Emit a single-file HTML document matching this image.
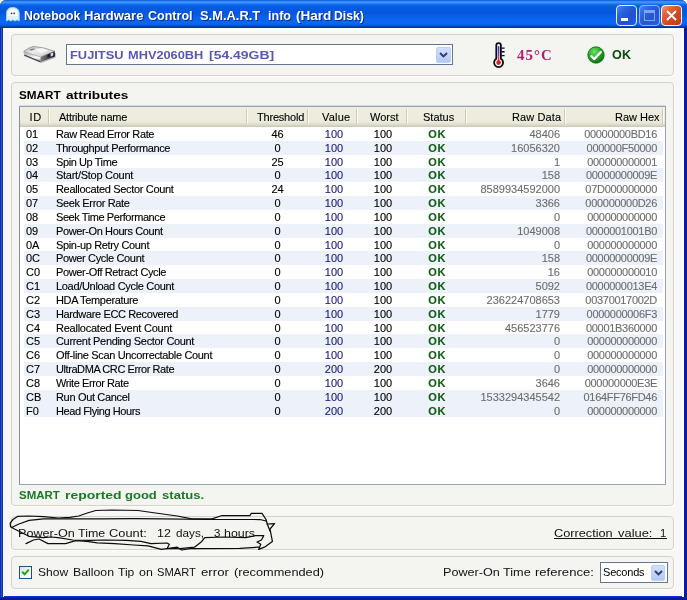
<!DOCTYPE html>
<html><head><meta charset="utf-8"><title>Notebook Hardware Control S.M.A.R.T info (Hard Disk)</title>
<style>
*{box-sizing:border-box;margin:0;padding:0}
html,body{width:687px;height:600px;overflow:hidden;background:#fff}
body{font-family:"Liberation Sans",sans-serif;font-size:11px;color:#000;position:relative}
.abs{position:absolute}
#win{filter:opacity(0.9999);position:absolute;left:0;top:0;width:687px;height:600px;background:#0a34d4;border-radius:6px 6px 0 0;overflow:hidden}
#title{position:absolute;z-index:2;left:0;top:0;width:687px;height:28.4px;
 background:linear-gradient(to bottom,#0a4ccc 0,#2f86f8 4%,#3f97ff 8%,#2a84fa 12%,#0f68ec 17%,#075ce2 23%,#0457de 45%,#0860ea 60%,#0a68f4 80%,#0a62ec 87%,#0850d4 92%,#0638ae 96.5%,#042a94 100%)}
#title .txt{position:absolute;left:24px;top:8px;font:bold 13px "Liberation Sans",sans-serif;color:#fff;white-space:pre;letter-spacing:-0.04px;text-shadow:1px 1px 0 #0a2c8c}
#client{position:absolute;left:3px;top:28px;width:681px;height:568px;background:#f8f7f5}
#client:before{content:"";position:absolute;left:0;top:0;width:681px;height:4px;background:linear-gradient(to bottom,#fff 0,#fff 50%,#f8f7f5 100%)}
.gb{position:absolute;border:1px solid #d3d2ca;border-radius:4px;background:#f4f4f1;box-shadow:1px 1px 0 #fdfdfb}
.v{font-family:"Liberation Sans",sans-serif;white-space:pre;position:absolute;transform-origin:0 50%}
/* listview */
#lv{position:absolute;left:19px;top:106px;width:647px;height:379px;border:1px solid #9aa3b0;border-left-color:#868f9c;background:#fff;box-shadow:0 -1px 0 #d8dce2}
#hdr{position:absolute;left:20px;top:107px;width:645px;height:20px;background:linear-gradient(to bottom,#eeede0 0,#ecebdc 75%,#e2dfcc 85%,#d6d2c2 93%,#cbc7b8 100%)}
.h{position:absolute;top:0;height:20px;line-height:20px;white-space:pre;color:#000;font-size:11px;-webkit-text-stroke:0.1px}
.sep{position:absolute;top:2px;width:2px;height:15px;border-left:1px solid #cdcabb;border-right:1px solid #fbfbf6}
.row{position:absolute;left:20px;width:645px;height:13.83px;line-height:14px;white-space:pre;-webkit-text-stroke:0.12px}
.row.alt:before{content:"";position:absolute;left:4px;right:2px;top:0;bottom:0;background:#edf2fa}
.c{position:absolute;top:0;height:14px}
.id{left:6px;letter-spacing:0}
.nm{left:36px;letter-spacing:-0.35px}
.th{left:228px;width:59px;text-align:center}
.va{left:288px;width:52px;text-align:center;color:#1a1a7a}
.wo{left:338px;width:50px;text-align:center}
.st{left:388.7px;width:57px;text-align:center;color:#0b5f10;font-weight:bold;letter-spacing:0.6px}
.rd{right:105px;text-align:right;color:#6e6e6e}
.rh{right:8px;text-align:right;color:#6e6e6e;letter-spacing:-0.3px}
</style></head><body>
<div id="win">
 <div id="title">
  <svg class="abs" style="left:5px;top:6px" width="16" height="17" viewBox="0 0 16 17">
   <path d="M1.5 15V7.5C1.5 3.5 4 1.5 7.8 1.5S14.2 3.5 14.2 7.5V15L12 13.8 10 15 7.8 13.8 5.8 15 3.8 13.8Z" fill="#dff2fb" stroke="#9fd0ee" stroke-width="1"/>
   <path d="M3 8C3 4.5 5 3 7.8 3S12.6 4.5 12.6 8V10H3Z" fill="#f6fcff"/>
   <circle cx="6.6" cy="7.3" r="0.9" fill="#3a3a5a"/><circle cx="9.2" cy="7.3" r="0.9" fill="#3a3a5a"/>
  </svg>
  <span class="v" style="left:24.05px;top:9px;font-weight:bold;font-size:13px;line-height:14px;color:#fff;text-shadow:1px 1px 0 #0a2c8c;transform:scaleX(0.939)">Notebook</span>
 <span class="v" style="left:84.10px;top:9px;font-weight:bold;font-size:13px;line-height:14px;color:#fff;text-shadow:1px 1px 0 #0a2c8c;transform:scaleX(1.003)">Hardware</span>
 <span class="v" style="left:147.82px;top:9px;font-weight:bold;font-size:13px;line-height:14px;color:#fff;text-shadow:1px 1px 0 #0a2c8c;transform:scaleX(0.964)">Control</span>
 <span class="v" style="left:199.50px;top:9px;font-weight:bold;font-size:13px;line-height:14px;color:#fff;text-shadow:1px 1px 0 #0a2c8c;transform:scaleX(0.993)">S.M.A.R.T</span>
 <span class="v" style="left:268.03px;top:9px;font-weight:bold;font-size:13px;line-height:14px;color:#fff;text-shadow:1px 1px 0 #0a2c8c;transform:scaleX(0.964)">info</span>
 <span class="v" style="left:296.17px;top:9px;font-weight:bold;font-size:13px;line-height:14px;color:#fff;text-shadow:1px 1px 0 #0a2c8c;transform:scaleX(1.043)">(Hard</span>
 <span class="v" style="left:334.36px;top:9px;font-weight:bold;font-size:13px;line-height:14px;color:#fff;text-shadow:1px 1px 0 #0a2c8c;transform:scaleX(0.937)">Disk)</span>
  <!-- buttons -->
  <div class="abs" style="left:616px;top:5px;width:21px;height:21px;border:1px solid #e4eeff;border-radius:4px;background:linear-gradient(135deg,#4a8af4 0,#2a62e0 30%,#2050d0 60%,#2a5ce0 100%)"><div class="abs" style="left:4px;top:12px;width:7px;height:3px;background:#fff"></div></div>
  <div class="abs" style="left:638.5px;top:5px;width:21px;height:21px;border:1px solid #8fb4f4;border-radius:4px;background:linear-gradient(135deg,#4a86f0 0,#2a62e0 30%,#2456d4 60%,#2a5ce0 100%)"><div class="abs" style="left:4px;top:4px;width:11px;height:11px;border:1px solid #7ea4ee;border-top:3px solid #7ea4ee"></div></div>
  <div class="abs" style="left:661px;top:5px;width:21px;height:21px;border:1px solid #fff;border-radius:4px;background:linear-gradient(135deg,#f2997a 0,#e4643e 28%,#cf4822 60%,#c03c18 100%)">
   <svg class="abs" style="left:3px;top:3px" width="13" height="13" viewBox="0 0 13 13"><path d="M2 2L11 11M11 2L2 11" stroke="#fff" stroke-width="1.9" stroke-linecap="butt"/></svg></div>
 </div>
 <div id="client"></div>

 <!-- group boxes -->
 <div class="gb" style="left:11px;top:34px;width:663px;height:42px"></div>
 <div class="gb" style="left:11px;top:82px;width:663px;height:424px"></div>
 <div class="gb" style="left:11px;top:516px;width:663px;height:34px"></div>
 <div class="gb" style="left:11px;top:556px;width:663px;height:33px"></div>

 <!-- hdd icon -->
 <svg class="abs" style="left:23px;top:45px" width="34" height="19" viewBox="0 0 34 19">
  <defs>
   <linearGradient id="hd1" x1="0" y1="0" x2="1" y2="1"><stop offset="0" stop-color="#a4a4a4"/><stop offset="0.4" stop-color="#ececec"/><stop offset="1" stop-color="#c4c4c4"/></linearGradient>
   <linearGradient id="hd2" x1="0" y1="0" x2="1" y2="0"><stop offset="0" stop-color="#808080"/><stop offset="0.45" stop-color="#4c4c52"/><stop offset="1" stop-color="#1e1e28"/></linearGradient>
   <linearGradient id="hd3" x1="0" y1="0" x2="0" y2="1"><stop offset="0" stop-color="#a4a4a4"/><stop offset="0.3" stop-color="#c8c8c8"/><stop offset="0.6" stop-color="#ffffff"/><stop offset="1" stop-color="#808080"/></linearGradient>
  </defs>
  <path d="M1 10.5L17.5 17.2 32 11.8 32.3 7 17 13 0.8 6.6Z" fill="#4a4a4e" opacity="0.35" transform="translate(0.6,0.9)"/>
  <path d="M0.7 6.5Q5 2.8 10.2 1.4 21 2.2 31.6 6.2L17.5 12.2Z" fill="url(#hd1)" stroke="#8e8e8e" stroke-width="0.8"/>
  <path d="M0.7 6.5L17.5 12.2V16.9L1 10.2Z" fill="url(#hd3)"/>
  <path d="M1.2 10.1L17.5 16.7" stroke="#3c3c40" stroke-width="1.1"/>
  <path d="M17.5 12.2L31.8 6.2 32 11.4 17.5 16.9Z" fill="url(#hd2)"/>
  <path d="M27.6 8.6L30.2 7.6V10.6L27.6 11.6Z" fill="#dcdce4"/>
  <path d="M24.6 9.4L27.2 8.4V11.6L24.6 12.6Z" fill="#1c1c28"/>
  <path d="M6.6 4.6L11.2 3.4 12 4.2 7.6 5.6Z" fill="#6c6c6c"/>
  <path d="M12.5 4.2L19 3.4 25 5.6 18 8.4Z" fill="#fafafa" opacity="0.8"/>
 </svg>

 <!-- device combobox -->
 <div class="abs" style="left:66px;top:44px;width:387px;height:21px;border:1px solid #64758e;background:#fff"></div>
 <span class="v" style="left:70.18px;top:48px;font-weight:bold;font-size:11px;line-height:14px;color:#5a56b4;transform:scaleX(1.169)">FUJITSU</span>
 <span class="v" style="left:127.79px;top:48px;font-weight:bold;font-size:11px;line-height:14px;color:#5a56b4;transform:scaleX(1.162)">MHV2060BH</span>
 <span class="v" style="left:209.24px;top:48px;font-weight:bold;font-size:11px;line-height:14px;color:#5a56b4;transform:scaleX(1.269)">[54.49GB]</span>
 <div class="abs" style="left:436px;top:47px;width:15px;height:15.5px;border-radius:2px;border:1px solid #bccff6;background:linear-gradient(to bottom,#d2defc 0,#c4d4fb 50%,#b4c8f6 100%)">
  <svg class="abs" style="left:2px;top:4px" width="9" height="6" viewBox="0 0 9 6"><path d="M1 1L4.5 4.5 8 1" stroke="#2e3f64" stroke-width="1.9" fill="none"/></svg></div>

 <!-- thermometer -->
 <svg class="abs" style="left:492px;top:42px" width="14" height="27" viewBox="0 0 14 27">
  <defs><linearGradient id="tg" x1="0" y1="0" x2="0" y2="1"><stop offset="0" stop-color="#2a2ae0"/><stop offset="0.45" stop-color="#5a3ad8"/><stop offset="0.75" stop-color="#d83a78"/><stop offset="1" stop-color="#e01818"/></linearGradient></defs>
  <path d="M4.3 3.5a2.3 2.3 0 0 1 4.6 0V16.7a4.5 4.5 0 1 1-4.6 0Z" fill="#fff" stroke="#0c0c0c" stroke-width="1.8"/>
  <rect x="5.8" y="4.2" width="1.6" height="15" fill="url(#tg)"/>
  <circle cx="6.6" cy="20.6" r="2.3" fill="#dc1c20"/>
  <path d="M9.6 6.1h3M9.6 9.8h3M9.6 13.6h3" stroke="#0c0c0c" stroke-width="1.4"/>
 </svg>
 <div class="v" style="left:517px;top:48px;font-family:'Liberation Serif',serif;font-weight:bold;font-size:14px;line-height:15px;color:#b0206a;letter-spacing:1px;transform:scaleX(1.06)">45°C</div>

 <!-- OK icon -->
 <svg class="abs" style="left:587.3px;top:45.7px" width="18" height="18" viewBox="0 0 18 18">
  <defs><radialGradient id="g" cx="40%" cy="30%" r="75%"><stop offset="0" stop-color="#6ee06a"/><stop offset="0.55" stop-color="#22a822"/><stop offset="1" stop-color="#0c6a10"/></radialGradient></defs>
  <circle cx="9" cy="9" r="8.2" fill="url(#g)" stroke="#0d6412" stroke-width="0.8"/>
  <path d="M4.4 10.2L7.3 13.1 13.8 6.1" stroke="#1c5a20" stroke-opacity="0.55" stroke-width="2.3" fill="none" stroke-linecap="round" stroke-linejoin="round" transform="translate(0.5,0.8)"/><path d="M4.4 10.2L7.3 13.1 13.8 6.1" stroke="#fff" stroke-width="2.3" fill="none" stroke-linecap="round" stroke-linejoin="round"/>
 </svg>
 <div class="v" style="left:611.5px;top:47.8px;font-weight:bold;font-size:12px;line-height:15px;color:#0c4a10;letter-spacing:0.14px;transform:scaleX(1.05)">OK</div>

 <span class="v" style="left:19.28px;top:88px;font-weight:bold;font-size:11px;line-height:14px;color:#000;transform:scaleX(1.065)">SMART</span>
 <span class="v" style="left:65.53px;top:88px;font-weight:bold;font-size:11px;line-height:14px;color:#000;transform:scaleX(1.245)">attributes</span>

 <div id="lv"></div>
 <div id="hdr">
  <span class="h" style="left:9.5px;letter-spacing:0.8px">ID</span>
  <span class="h" style="left:39px;letter-spacing:-0.25px">Attribute name</span>
  <span class="h" style="left:237px;letter-spacing:-0.2px">Threshold</span>
  <span class="h" style="left:302px;letter-spacing:0.2px">Value</span>
  <span class="h" style="left:350px;letter-spacing:0">Worst</span>
  <span class="h" style="left:403px;letter-spacing:0">Status</span>
  <span class="h" style="left:492px;letter-spacing:0.1px">Raw Data</span>
  <span class="h" style="left:595px;letter-spacing:0">Raw Hex</span>
  <i class="sep" style="left:28px"></i><i class="sep" style="left:226px"></i><i class="sep" style="left:286.5px"></i>
  <i class="sep" style="left:336px"></i><i class="sep" style="left:386px"></i><i class="sep" style="left:444.5px"></i>
  <i class="sep" style="left:544px"></i><i class="sep" style="left:642px"></i>
 </div>
<div class="row" style="top:127.00px"><span class="c id">01</span><span class="c nm" style="letter-spacing:-0.371px">Raw Read Error Rate</span><span class="c th">46</span><span class="c va">100</span><span class="c wo">100</span><span class="c st">OK</span><span class="c rd">48406</span><span class="c rh">00000000BD16</span></div>
<div class="row alt" style="top:140.83px"><span class="c id">02</span><span class="c nm" style="letter-spacing:-0.373px">Throughput Performance</span><span class="c th">0</span><span class="c va">100</span><span class="c wo">100</span><span class="c st">OK</span><span class="c rd">16056320</span><span class="c rh">000000F50000</span></div>
<div class="row" style="top:154.66px"><span class="c id">03</span><span class="c nm" style="letter-spacing:-0.411px">Spin Up Time</span><span class="c th">25</span><span class="c va">100</span><span class="c wo">100</span><span class="c st">OK</span><span class="c rd">1</span><span class="c rh">000000000001</span></div>
<div class="row alt" style="top:168.49px"><span class="c id">04</span><span class="c nm" style="letter-spacing:-0.264px">Start/Stop Count</span><span class="c th">0</span><span class="c va">100</span><span class="c wo">100</span><span class="c st">OK</span><span class="c rd">158</span><span class="c rh">00000000009E</span></div>
<div class="row" style="top:182.32px"><span class="c id">05</span><span class="c nm" style="letter-spacing:-0.323px">Reallocated Sector Count</span><span class="c th">24</span><span class="c va">100</span><span class="c wo">100</span><span class="c st">OK</span><span class="c rd">8589934592000</span><span class="c rh">07D000000000</span></div>
<div class="row alt" style="top:196.15px"><span class="c id">07</span><span class="c nm" style="letter-spacing:-0.352px">Seek Error Rate</span><span class="c th">0</span><span class="c va">100</span><span class="c wo">100</span><span class="c st">OK</span><span class="c rd">3366</span><span class="c rh">000000000D26</span></div>
<div class="row" style="top:209.98px"><span class="c id">08</span><span class="c nm" style="letter-spacing:-0.424px">Seek Time Performance</span><span class="c th">0</span><span class="c va">100</span><span class="c wo">100</span><span class="c st">OK</span><span class="c rd">0</span><span class="c rh">000000000000</span></div>
<div class="row alt" style="top:223.81px"><span class="c id">09</span><span class="c nm" style="letter-spacing:-0.386px">Power-On Hours Count</span><span class="c th">0</span><span class="c va">100</span><span class="c wo">100</span><span class="c st">OK</span><span class="c rd">1049008</span><span class="c rh">0000001001B0</span></div>
<div class="row" style="top:237.64px"><span class="c id">0A</span><span class="c nm" style="letter-spacing:-0.346px">Spin-up Retry Count</span><span class="c th">0</span><span class="c va">100</span><span class="c wo">100</span><span class="c st">OK</span><span class="c rd">0</span><span class="c rh">000000000000</span></div>
<div class="row alt" style="top:251.47px"><span class="c id">0C</span><span class="c nm" style="letter-spacing:-0.356px">Power Cycle Count</span><span class="c th">0</span><span class="c va">100</span><span class="c wo">100</span><span class="c st">OK</span><span class="c rd">158</span><span class="c rh">00000000009E</span></div>
<div class="row" style="top:265.30px"><span class="c id">C0</span><span class="c nm" style="letter-spacing:-0.360px">Power-Off Retract Cycle</span><span class="c th">0</span><span class="c va">100</span><span class="c wo">100</span><span class="c st">OK</span><span class="c rd">16</span><span class="c rh">000000000010</span></div>
<div class="row alt" style="top:279.13px"><span class="c id">C1</span><span class="c nm" style="letter-spacing:-0.316px">Load/Unload Cycle Count</span><span class="c th">0</span><span class="c va">100</span><span class="c wo">100</span><span class="c st">OK</span><span class="c rd">5092</span><span class="c rh">0000000013E4</span></div>
<div class="row" style="top:292.96px"><span class="c id">C2</span><span class="c nm" style="letter-spacing:-0.342px">HDA Temperature</span><span class="c th">0</span><span class="c va">100</span><span class="c wo">100</span><span class="c st">OK</span><span class="c rd">236224708653</span><span class="c rh">00370017002D</span></div>
<div class="row alt" style="top:306.79px"><span class="c id">C3</span><span class="c nm" style="letter-spacing:-0.369px">Hardware ECC Recovered</span><span class="c th">0</span><span class="c va">100</span><span class="c wo">100</span><span class="c st">OK</span><span class="c rd">1779</span><span class="c rh">0000000006F3</span></div>
<div class="row" style="top:320.62px"><span class="c id">C4</span><span class="c nm" style="letter-spacing:-0.243px">Reallocated Event Count</span><span class="c th">0</span><span class="c va">100</span><span class="c wo">100</span><span class="c st">OK</span><span class="c rd">456523776</span><span class="c rh">00001B360000</span></div>
<div class="row alt" style="top:334.45px"><span class="c id">C5</span><span class="c nm" style="letter-spacing:-0.331px">Current Pending Sector Count</span><span class="c th">0</span><span class="c va">100</span><span class="c wo">100</span><span class="c st">OK</span><span class="c rd">0</span><span class="c rh">000000000000</span></div>
<div class="row" style="top:348.28px"><span class="c id">C6</span><span class="c nm" style="letter-spacing:-0.340px">Off-line Scan Uncorrectable Count</span><span class="c th">0</span><span class="c va">100</span><span class="c wo">100</span><span class="c st">OK</span><span class="c rd">0</span><span class="c rh">000000000000</span></div>
<div class="row alt" style="top:362.11px"><span class="c id">C7</span><span class="c nm" style="letter-spacing:-0.420px">UltraDMA CRC Error Rate</span><span class="c th">0</span><span class="c va">200</span><span class="c wo">200</span><span class="c st">OK</span><span class="c rd">0</span><span class="c rh">000000000000</span></div>
<div class="row" style="top:375.94px"><span class="c id">C8</span><span class="c nm" style="letter-spacing:-0.417px">Write Error Rate</span><span class="c th">0</span><span class="c va">100</span><span class="c wo">100</span><span class="c st">OK</span><span class="c rd">3646</span><span class="c rh">000000000E3E</span></div>
<div class="row alt" style="top:389.77px"><span class="c id">CB</span><span class="c nm" style="letter-spacing:-0.333px">Run Out Cancel</span><span class="c th">0</span><span class="c va">100</span><span class="c wo">100</span><span class="c st">OK</span><span class="c rd">1533294345542</span><span class="c rh">0164FF76FD46</span></div>
<div class="row alt" style="top:403.60px"><span class="c id">F0</span><span class="c nm" style="letter-spacing:-0.411px">Head Flying Hours</span><span class="c th">0</span><span class="c va">200</span><span class="c wo">200</span><span class="c st">OK</span><span class="c rd">0</span><span class="c rh">000000000000</span></div>

 <span class="v" style="left:19.29px;top:488.4px;font-weight:bold;font-size:11px;line-height:14px;color:#187a28;transform:scaleX(1.044)">SMART</span>
 <span class="v" style="left:65.21px;top:488.4px;font-weight:bold;font-size:11px;line-height:14px;color:#187a28;transform:scaleX(1.269)">reported</span>
 <span class="v" style="left:125.41px;top:488.4px;font-weight:bold;font-size:11px;line-height:14px;color:#187a28;transform:scaleX(1.184)">good</span>
 <span class="v" style="left:161.92px;top:488.4px;font-weight:bold;font-size:11px;line-height:14px;color:#187a28;transform:scaleX(1.190)">status.</span>

 <span class="v" style="left:18.17px;top:526px;font-weight:normal;font-size:11px;line-height:14px;color:#111;transform:scaleX(1.146)">Power-On</span>
 <span class="v" style="left:77.97px;top:526px;font-weight:normal;font-size:11px;line-height:14px;color:#111;transform:scaleX(1.132)">Time</span>
 <span class="v" style="left:109.20px;top:526px;font-weight:normal;font-size:11px;line-height:14px;color:#111;transform:scaleX(1.166)">Count:</span>
 <span class="v" style="left:157.30px;top:526px;font-weight:normal;font-size:11px;line-height:14px;color:#111;transform:scaleX(1.128)">12</span>
 <span class="v" style="left:175.67px;top:526px;font-weight:normal;font-size:11px;line-height:14px;color:#111;transform:scaleX(1.065)">days,</span>
 <span class="v" style="left:214.18px;top:526px;font-weight:normal;font-size:11px;line-height:14px;color:#111;transform:scaleX(1.038)">3</span>
 <span class="v" style="left:224.10px;top:526px;font-weight:normal;font-size:11px;line-height:14px;color:#111;transform:scaleX(1.129)">hours</span>
 <span class="v" style="left:553.81px;top:526px;font-weight:normal;font-size:11px;line-height:14px;color:#111;transform:scaleX(1.156)">Correction</span>
 <span class="v" style="left:617.68px;top:526px;font-weight:normal;font-size:11px;line-height:14px;color:#111;transform:scaleX(1.173)">value:</span>
 <span class="v" style="left:659.98px;top:526px;font-weight:normal;font-size:11px;line-height:14px;color:#111;transform:scaleX(1.021)">1</span><div class="abs" style="left:553.5px;top:538px;width:113.5px;height:1px;background:#111"></div>

 <!-- scribble -->
 <svg class="abs" style="left:0;top:500px" width="290" height="60" viewBox="0 500 290 60" fill="none" stroke="#0c0c0c" stroke-width="1.25" stroke-linejoin="round" stroke-linecap="round">
  <path d="M267 524L274.6 523.6 270 529 272.4 541.4 264.4 547.2 258.6 549.4 260.8 544.3 257 542 261.5 540 263.7 535.6 255.7 535.6 245.5 537.7 223.7 537 204.7 537.7 201.8 541.4 194.5 547.2 180 548.7 167 548.7 161.3 549.4 148 545.8 133.7 545 114.7 543.6 97.3 542.8 87 541.4 75.7 540.7 65.5 543.6 48 543.6 39 539 33.5 540 26 543.6"/>
  <path d="M258.6 547.2L239.7 548.4 190 548.7 181.7 550 177.3 547.2 167 548.7 169.3 544.3 167 543 151 543.6 141 541.4 126.4 540.4 104.6 540 90 540.4 72.8 540 58 537.7 51 537 43.7 537.7 29 536.3 20.4 532 14.5 529 10.5 526.8 10.2 523.2 13 519.5 17.5 516.4 29 516 43.7 516.6 58.2 518 70 517.4 78.6 516 87.3 513 95.8 510.5 111.8 510 138 510.5 155.5 513 177.3 516 191.6 518.8 212 518.8 222 515.5 250 515.5 251.3 513.4 262 513.4 266 519.5 267.3 524 270 531"/>
  <path d="M11.6 527.5L19 524 29 520.3 43.7 518.8 100 518.8 133.7 518.5 162.8 518.8 209 519.5 260 519.5 266 521"/>
 </svg>

 <!-- checkbox -->
 <div class="abs" style="left:19px;top:566px;width:13px;height:13px;border:1px solid #1c5180;background:linear-gradient(135deg,#dcdcd7 0,#f3f3ef 50%,#fff 100%)">
  <svg class="abs" style="left:1px;top:1px" width="9" height="9" viewBox="0 0 9 9"><path d="M1.2 3.8L3.6 6.3 7.8 1.6" stroke="#21a121" stroke-width="2" fill="none"/></svg></div>
 <span class="v" style="left:38.25px;top:565px;font-weight:normal;font-size:11px;line-height:14px;color:#111;transform:scaleX(1.096)">Show</span>
 <span class="v" style="left:73.19px;top:565px;font-weight:normal;font-size:11px;line-height:14px;color:#111;transform:scaleX(1.117)">Balloon</span>
 <span class="v" style="left:117.78px;top:565px;font-weight:normal;font-size:11px;line-height:14px;color:#111;transform:scaleX(1.099)">Tip</span>
 <span class="v" style="left:139.34px;top:565px;font-weight:normal;font-size:11px;line-height:14px;color:#111;transform:scaleX(1.127)">on</span>
 <span class="v" style="left:157.19px;top:565px;font-weight:normal;font-size:11px;line-height:14px;color:#111;transform:scaleX(1.016)">SMART</span>
 <span class="v" style="left:200.50px;top:565px;font-weight:normal;font-size:11px;line-height:14px;color:#111;transform:scaleX(1.200)">error</span>
 <span class="v" style="left:233.59px;top:565px;font-weight:normal;font-size:11px;line-height:14px;color:#111;transform:scaleX(1.160)">(recommended)</span>
 <span class="v" style="left:443.37px;top:565px;font-weight:normal;font-size:11px;line-height:14px;color:#111;transform:scaleX(1.146)">Power-On</span>
 <span class="v" style="left:503.07px;top:565px;font-weight:normal;font-size:11px;line-height:14px;color:#111;transform:scaleX(1.154)">Time</span>
 <span class="v" style="left:535.47px;top:565px;font-weight:normal;font-size:11px;line-height:14px;color:#111;transform:scaleX(1.188)">reference:</span>
 <div class="abs" style="left:600px;top:562px;width:68px;height:21px;border:1px solid #64758e;background:#fff"></div>
 <div class="v" style="left:603px;top:565px;font-size:11px;line-height:14px;letter-spacing:-0.2px">Seconds</div>
 <div class="abs" style="left:650.5px;top:565px;width:14.5px;height:15.5px;border-radius:2px;border:1px solid #bccff6;background:linear-gradient(to bottom,#d2defc 0,#c4d4fb 50%,#b4c8f6 100%)">
  <svg class="abs" style="left:2px;top:4px" width="9" height="6" viewBox="0 0 9 6"><path d="M1 1L4.5 4.5 8 1" stroke="#2e3f64" stroke-width="1.9" fill="none"/></svg></div>

 <!-- window borders -->
 <div class="abs" style="left:0;top:28px;width:4px;height:572px;background:linear-gradient(to right,#0a2cb4 0,#0a2cb4 25%,#2858d6 25%,#2858d6 50%,#0a2c94 50%,#0a2c94 75%,#ffffff 75%)"></div>
 <div class="abs" style="left:682px;top:28px;width:5px;height:572px;background:linear-gradient(to right,#fdfdfd 0,#ffffff 40%,#0c1e9c 40%,#0a1a98 70%,#0c22a6 100%)"></div>
 <div class="abs" style="left:0;top:596.5px;width:687px;height:3.5px;background:linear-gradient(to bottom,#0c26a8,#0a1c9c 40%,#08188e)"></div>
</div>
</body></html>
